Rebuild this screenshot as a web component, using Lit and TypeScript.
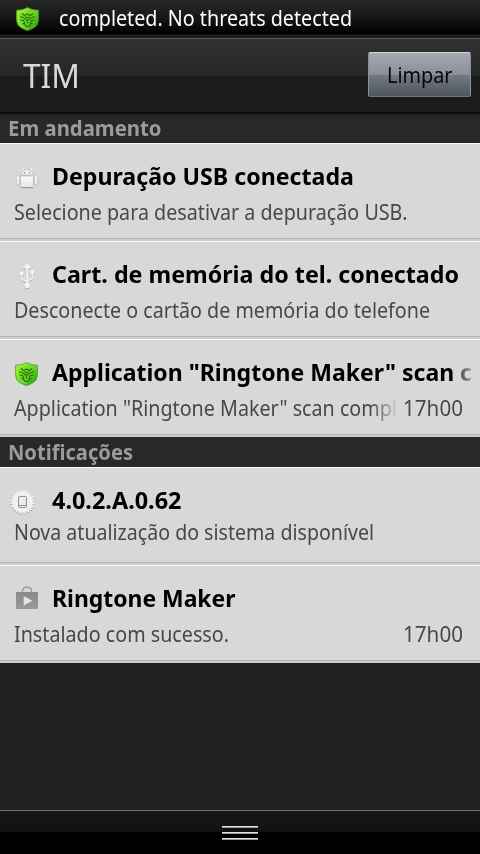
import { LitElement, html, css, svg } from "lit";
import { customElement, property } from "lit/decorators.js";

const shield = html`<svg width="24" height="26" viewBox="0 0 24 26">
  <defs>
    <linearGradient id="g" x1="0" y1="0" x2="1" y2="1">
      <stop offset="0" stop-color="#a0ee2c" /><stop offset=".55" stop-color="#66d41f" /><stop offset="1" stop-color="#1d9410" />
    </linearGradient>
  </defs>
  <path d="M12.500 1.400C10 3 6.500 4 1.700 4.200 1.200 10 1.300 16.500 3.200 19.200 5 21.800 9.500 23.500 12.500 24.600c3-1.100 7.500-2.800 9.300-5.400 1.900-2.700 2-9.200 1.500-15C18.500 4 15 3 12.500 1.400z" fill="url(#g)" stroke="#4aa51a" stroke-width=".8" />
  <path d="M12.500 3.200C10.500 4.500 7 5.500 3.400 5.700 3 11 3.200 15.800 4.700 18c1.500 2.200 5 3.500 7.800 4.600" fill="none" stroke="#b9f760" stroke-width=".8" opacity=".7" />
  <path d="M7 7.500l2.500 2 3-1.300 3 1.300 2.500-2M5 10.500l4 1.500 3.500 2.500L16 12l4-1.500M5.500 14l3.200.6 1.300 3M19.500 14l-3.200.6-1.300 3M7.500 18l1.500-.8 2 3.300h3l2-3.300 1.500.8M10.300 10.800l2.200 1 2.200-1M12.500 15v2.500" fill="none" stroke="#1f6a0e" stroke-width="1.100" opacity=".9" />
</svg>`;

const robot = html`<svg width="24" height="26" viewBox="0 0 24 26">
  <defs><linearGradient id="a" x1="0" y1="0" x2="0" y2="1"><stop offset="0" stop-color="#fbfbfb" /><stop offset="1" stop-color="#e6e6e6" /></linearGradient></defs>
  <g fill="url(#a)" stroke="#b8b8b8" stroke-width=".7">
    <path d="M8.500 5.500L7 2.500M15.500 5.500L17 2.500" stroke="#efefef" stroke-width="1.300" />
    <path d="M5.800 9.300C6 6 8.500 3.800 12 3.800s6 2.200 6.200 5.500z" />
    <rect x="5.600" y="10" width="12.800" height="11.500" rx="1" />
    <rect x="1.300" y="9.500" width="3.300" height="9.800" rx="1.600" />
    <rect x="19.400" y="9.500" width="3.300" height="9.800" rx="1.600" />
  </g>
  <path d="M5.800 21.700h12.400" stroke="#8e8e8e" />
  <circle cx="9.500" cy="6.800" r=".7" fill="#777" /><circle cx="14.500" cy="6.800" r=".7" fill="#777" />
</svg>`;

const usbShape = svg`<path d="M12.300 5v17" stroke-width="2.200" /><path d="M6.500 12.500v3.200c0 1.800 5.300 1.800 5.800 3.600M17.300 10.500v4.500c0 1.600-4.500 1.800-5 3.600" fill="none" stroke-width="1.700" />
  <path d="M12.300 .5l4.400 5H7.900z" stroke="none" /><circle cx="6.500" cy="10.500" r="2.200" stroke="none" /><rect x="15.300" y="7" width="4" height="4" stroke="none" /><circle cx="12.300" cy="22.600" r="2.700" stroke="none" />`;
const usb = html`<svg width="24" height="28" viewBox="0 0 24 28">
  <g transform="translate(0 1)" fill="#aaa" stroke="#aaa">${usbShape}</g>
  <g fill="#f3f3f3" stroke="#f3f3f3">${usbShape}</g>
</svg>`;

const burst = Array.from({ length: 44 }, (_, i) => {
  const r = i % 2 ? 10 : 13;
  const t = (i * Math.PI) / 22;
  return `${(14.5 + r * Math.sin(t)).toFixed(2)},${(14 - r * Math.cos(t)).toFixed(2)}`;
}).join(" ");
const update = html`<svg width="29" height="29" viewBox="0 0 29 29">
  <polygon points=${burst} transform="translate(0 1)" fill="#aaa" />
  <polygon points=${burst} fill="#f1f1f1" />
  <rect x="10.500" y="8.500" width="8" height="11" rx=".8" fill="#ececec" stroke="#909090" />
  <path d="M10.500 17.500h8" stroke="#909090" />
</svg>`;

const bag = html`<svg width="24" height="24" viewBox="0 0 24 24">
  <defs><linearGradient id="b" x1="0" y1="0" x2="0" y2="1"><stop offset="0" stop-color="#8a8a8a" /><stop offset="1" stop-color="#9a9a9a" /></linearGradient></defs>
  <path d="M7.400 7V5.500c0-2.800 1.900-4.300 4.600-4.300s4.600 1.500 4.600 4.300V7" fill="none" stroke="#959595" stroke-width="1.300" />
  <rect x="1" y="6" width="22" height="17" fill="url(#b)" />
  <path d="M8.700 10v9.600l8.600-4.800z" fill="#e4e4e4" />
</svg>`;

/** One line of text whose glyphs are condensed or widened to a set length. */
@customElement("fit-text")
class FitText extends LitElement {
  @property({ type: Number }) length = 0;
  static styles = css`
    :host { display: block; white-space: pre; }
    .t { display: inline-block; transform-origin: 0 0; }
  `;
  render() {
    return html`<span class="t"><slot></slot></span>`;
  }
  firstUpdated() {
    const t = this.renderRoot.querySelector<HTMLElement>(".t")!;
    const w = t.getBoundingClientRect().width;
    if (w && this.length) t.style.transform = `scaleX(${this.length / w})`;
  }
}

interface Note {
  icon: unknown;
  kind: string;
  title: string;
  titleLength: number;
  text: string;
  textLength: number;
  time?: string;
}

const ongoing: Note[] = [
  { icon: robot, kind: "robot", title: "Depuração USB conectada", titleLength: 302, text: "Selecione para desativar a depuração USB.", textLength: 393.5 },
  { icon: usb, kind: "usb", title: "Cart. de memória do tel. conectado", titleLength: 407, text: "Desconecte o cartão de memória do telefone", textLength: 416 },
  { icon: shield, kind: "shield", title: 'Application "Ringtone Maker" scan c', titleLength: 420, text: 'Application "Ringtone Maker" scan comple', textLength: 394, time: "17h00" },
];
const notices: Note[] = [
  { icon: update, kind: "update", title: "4.0.2.A.0.62", titleLength: 129.5, text: "Nova atualização do sistema disponível", textLength: 360 },
  { icon: bag, kind: "bag", title: "Ringtone Maker", titleLength: 183.5, text: "Instalado com sucesso.", textLength: 215, time: "17h00" },
];

@customElement("app-root")
class AppRoot extends LitElement {
  static styles = css`
    :host { display: flex; flex-direction: column; width: 480px; height: 854px; overflow: hidden; background: #222; font-family: "Noto Sans", sans-serif; }
    svg { display: block; }
    .status { flex: none; height: 38px; box-sizing: border-box; padding: 3px 0 0 15px; display: flex; align-items: flex-start; gap: 20px; color: #fff; font-size: 21.500px; line-height: 30px; background: linear-gradient(#282828, #1c1c1c 35%, #080808 75%, #000 34px, #1c1c1c 35px); }
    .status svg { margin-top: 3px; }
    .head { flex: none; height: 76px; box-sizing: border-box; border-top: 1px solid #585858; border-bottom: 2px solid #0c0c0c; padding: 0 9px 0 23px; display: flex; align-items: center; justify-content: space-between; background: linear-gradient(#313131, #262626 37px, #1c1c1c 37px); }
    .carrier { color: #d9d9d9; font-size: 33px; line-height: 46px; }
    .clear { width: 103px; height: 45px; box-sizing: border-box; margin-top: -3px; border: 1px solid; border-color: #d3d7dc #8b9097 #71767f #8b9097; border-radius: 2px; padding: 7px 0 0 18px; font-size: 21.500px; line-height: 30px; color: #05070b; background: linear-gradient(#a4a9b1, #8b9097 50%, #737983 51%, #50565f); }
    .section { flex: none; height: 30px; box-sizing: border-box; padding-left: 8px; background: #282828; color: #9b9b9b; font-size: 21px; font-weight: 700; line-height: 31px; }
    .section.first { height: 29px; line-height: 28px; background: linear-gradient(#202020, #282828 6px); }
    .note { flex: none; height: 98px; box-sizing: border-box; border-top: 1px solid #fafafa; padding-top: 16px; background: linear-gradient(#d8d8d8 94px, #b3b3b3 94px, #b3b3b3 95px, #cfcfcf 95px); }
    .top { display: flex; align-items: flex-start; height: 32px; margin-bottom: 5px; }
    .update .top { margin-bottom: 1px; }
    .icon { width: 37px; margin-left: 15px; flex: none; }
    .shield .icon { margin-left: 14px; width: 38px; padding-top: 5px; }
    .robot .icon { padding-top: 6px; }
    .usb .icon { padding-top: 5px; }
    .update .icon { margin-left: 8px; width: 44px; padding-top: 4px; }
    .bag .icon { padding-top: 4px; }
    .title { flex: 1; overflow: hidden; color: #000; font-size: 24px; font-weight: 700; line-height: 32px; margin-right: 8px; }
    .line { display: flex; color: #484848; font-size: 22px; line-height: 28px; padding: 0 17px 0 14px; }
    .text { flex: 1; min-width: 0; overflow: hidden; margin-right: 6px; }
    .shield .title { -webkit-mask-image: linear-gradient(90deg, #000 400px, transparent 425px); }
    .shield .text { -webkit-mask-image: linear-gradient(90deg, #000 356px, transparent 386px); }
    .time { width: 60px; flex: none; }
    .foot { flex: none; margin-top: auto; height: 44px; box-sizing: border-box; border-top: 1px solid #717171; background: linear-gradient(#161616, #121212 21px, #000 21px); display: flex; flex-direction: column; align-items: center; gap: 4px; padding-top: 15px; }
    .bar { width: 36px; height: 2px; background: linear-gradient(#e2e4e4 50%, #969a9a 50%); }
  `;

  note(n: Note) {
    return html`<div class="note ${n.kind}">
      <div class="top">
        <div class="icon">${n.icon}</div>
        <div class="title"><fit-text .length=${n.titleLength}>${n.title}</fit-text></div>
      </div>
      <div class="line">
        <div class="text"><fit-text .length=${n.textLength}>${n.text}</fit-text></div>
        ${n.time ? html`<div class="time"><fit-text .length=${60}>${n.time}</fit-text></div>` : ""}
      </div>
    </div>`;
  }

  render() {
    return html`
      <div class="status">${shield}<fit-text .length=${293}>completed. No threats detected</fit-text></div>
      <div class="head">
        <div class="carrier"><fit-text .length=${57}>TIM</fit-text></div>
        <div class="clear"><fit-text .length=${65.5}>Limpar</fit-text></div>
      </div>
      <div class="section first"><fit-text .length=${153.5}>Em andamento</fit-text></div>
      ${ongoing.map((n) => this.note(n))}
      <div class="section"><fit-text .length=${125}>Notificações</fit-text></div>
      ${notices.map((n) => this.note(n))}
      <div class="foot"><div class="bar"></div><div class="bar"></div><div class="bar"></div></div>
    `;
  }
}
